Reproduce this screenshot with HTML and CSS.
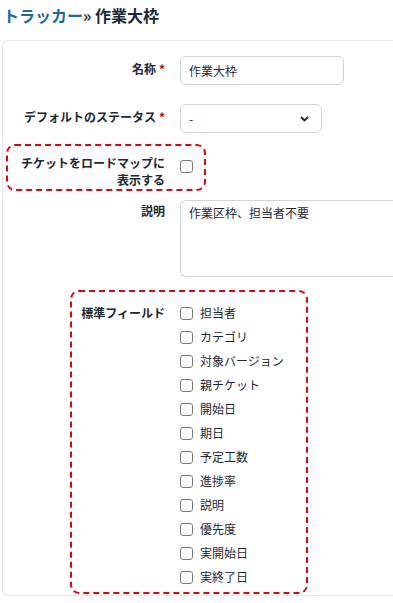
FILE: index.html
```html
<!DOCTYPE html>
<html lang="ja">
<head>
<meta charset="utf-8">
<link rel="stylesheet" href="styles.css">
</head>
<body>
<h2 class="title"><a class="crumb" href="#">トラッカー</a>» 作業大枠</h2>
<div class="box">
  <div class="row row-name">
    <label class="lbl">名称<span class="req">*</span></label>
    <div class="field"><input class="text" type="text" value="作業大枠"></div>
  </div>
  <div class="row row-status">
    <label class="lbl">デフォルトのステータス<span class="req">*</span></label>
    <div class="field">
      <div class="select"><span>-</span>
        <svg class="chev" width="9" height="6" viewBox="0 0 9 6"><path d="M1 1l3.5 3.5L8 1" fill="none" stroke="#1d2a38" stroke-width="1.8"/></svg>
      </div>
    </div>
  </div>
  <div class="row row-roadmap">
    <label class="lbl">チケットをロードマップに<br>表示する</label>
    <div class="field"><span class="cb cb-top"></span></div>
  </div>
  <div class="row row-desc">
    <label class="lbl">説明</label>
    <div class="field"><div class="textarea">作業区枠、担当者不要</div></div>
  </div>
  <div class="row row-fields">
    <label class="lbl">標準フィールド</label>
    <ul class="list">
      <li><span class="cb"></span>担当者</li>
      <li><span class="cb"></span>カテゴリ</li>
      <li><span class="cb"></span>対象バージョン</li>
      <li><span class="cb"></span>親チケット</li>
      <li><span class="cb"></span>開始日</li>
      <li><span class="cb"></span>期日</li>
      <li><span class="cb"></span>予定工数</li>
      <li><span class="cb"></span>進捗率</li>
      <li><span class="cb"></span>説明</li>
      <li><span class="cb"></span>優先度</li>
      <li><span class="cb"></span>実開始日</li>
      <li><span class="cb"></span>実終了日</li>
    </ul>
  </div>
  <div class="mark mark-1"></div>
  <div class="mark mark-2"></div>
</div>
</body>
</html>
```
FILE: styles.css
```css
html, body {
  margin: 0;
  padding: 0;
  background: #fff;
  overflow: hidden;
}
body {
  width: 393px;
  height: 603px;
  font-family: "Noto Sans CJK JP", "Noto Sans", sans-serif;
  font-size: 12px;
  color: #1c2833;
}
.title {
  margin: 0;
  padding: 4px 0 0 3px;
  height: 32px;
  box-sizing: border-box;
  font-size: 16px;
  line-height: 22px;
  font-weight: 700;
  color: #1c2a38;
}
.crumb {
  color: #1a6aa3;
  text-decoration: none;
}
.box {
  position: relative;
  margin: 8px 0 0 2px;
  width: 391px;
  height: 556px;
  box-sizing: border-box;
  border: 1px solid #e3e5e8;
  border-right: none;
  border-radius: 6px 0 0 6px;
  overflow: hidden;
}
.row {
  display: grid;
  grid-template-columns: 162px 1fr;
  column-gap: 15px;
  align-items: start;
}
.field {
  min-width: 0;
}
.lbl {
  text-align: right;
  font-weight: 700;
  line-height: 17px;
  color: #1c2833;
}
.req {
  color: #bb0000;
  margin-left: 3px;
}
.row-name { padding-top: 15px; }
.row-name .lbl { padding-top: 4px; }
.row-status { padding-top: 19px; }
.row-status .lbl { padding-top: 4px; }
.row-roadmap { padding-top: 21px; }
.row-desc { padding-top: 12px; }
.row-desc .lbl { padding-top: 2px; }
.row-fields { padding-top: 24px; }
.row-fields .lbl { line-height: 24px; }

.text {
  display: block;
  width: 164px;
  height: 29px;
  box-sizing: border-box;
  border: 1px solid #cfd4d9;
  border-radius: 6px;
  padding: 0 8px;
  font: inherit;
  color: #1c2833;
  outline: none;
}
.select {
  width: 142px;
  height: 29px;
  box-sizing: border-box;
  border: 1px solid #cfd4d9;
  border-radius: 6px;
  padding: 0 12px 0 8px;
  display: flex;
  align-items: center;
  justify-content: space-between;
  line-height: 27px;
}
.textarea {
  height: 77px;
  width: 214px;
  box-sizing: border-box;
  border: 1px solid #cfd4d9;
  border-right: none;
  border-radius: 6px 0 0 6px;
  padding: 2px 8px;
  line-height: 20px;
}
.cb {
  display: inline-block;
  width: 13px;
  height: 13px;
  box-sizing: border-box;
  border: 1px solid #7a7a7a;
  border-radius: 3px;
  background: #fff;
  vertical-align: middle;
}
.cb-top { margin-top: 3px; }
.list {
  list-style: none;
  margin: 0;
  padding: 0;
}
.list li {
  display: flex;
  align-items: center;
  gap: 7px;
  height: 24px;
  line-height: 24px;
}
.mark {
  position: absolute;
  border: 2px dashed #e8000b;
  border-radius: 9px;
  box-sizing: border-box;
}
.mark-1 {
  left: 3px;
  top: 103px;
  width: 200px;
  height: 47px;
}
.mark-2 {
  left: 67px;
  top: 249px;
  width: 238px;
  height: 304px;
}
```
